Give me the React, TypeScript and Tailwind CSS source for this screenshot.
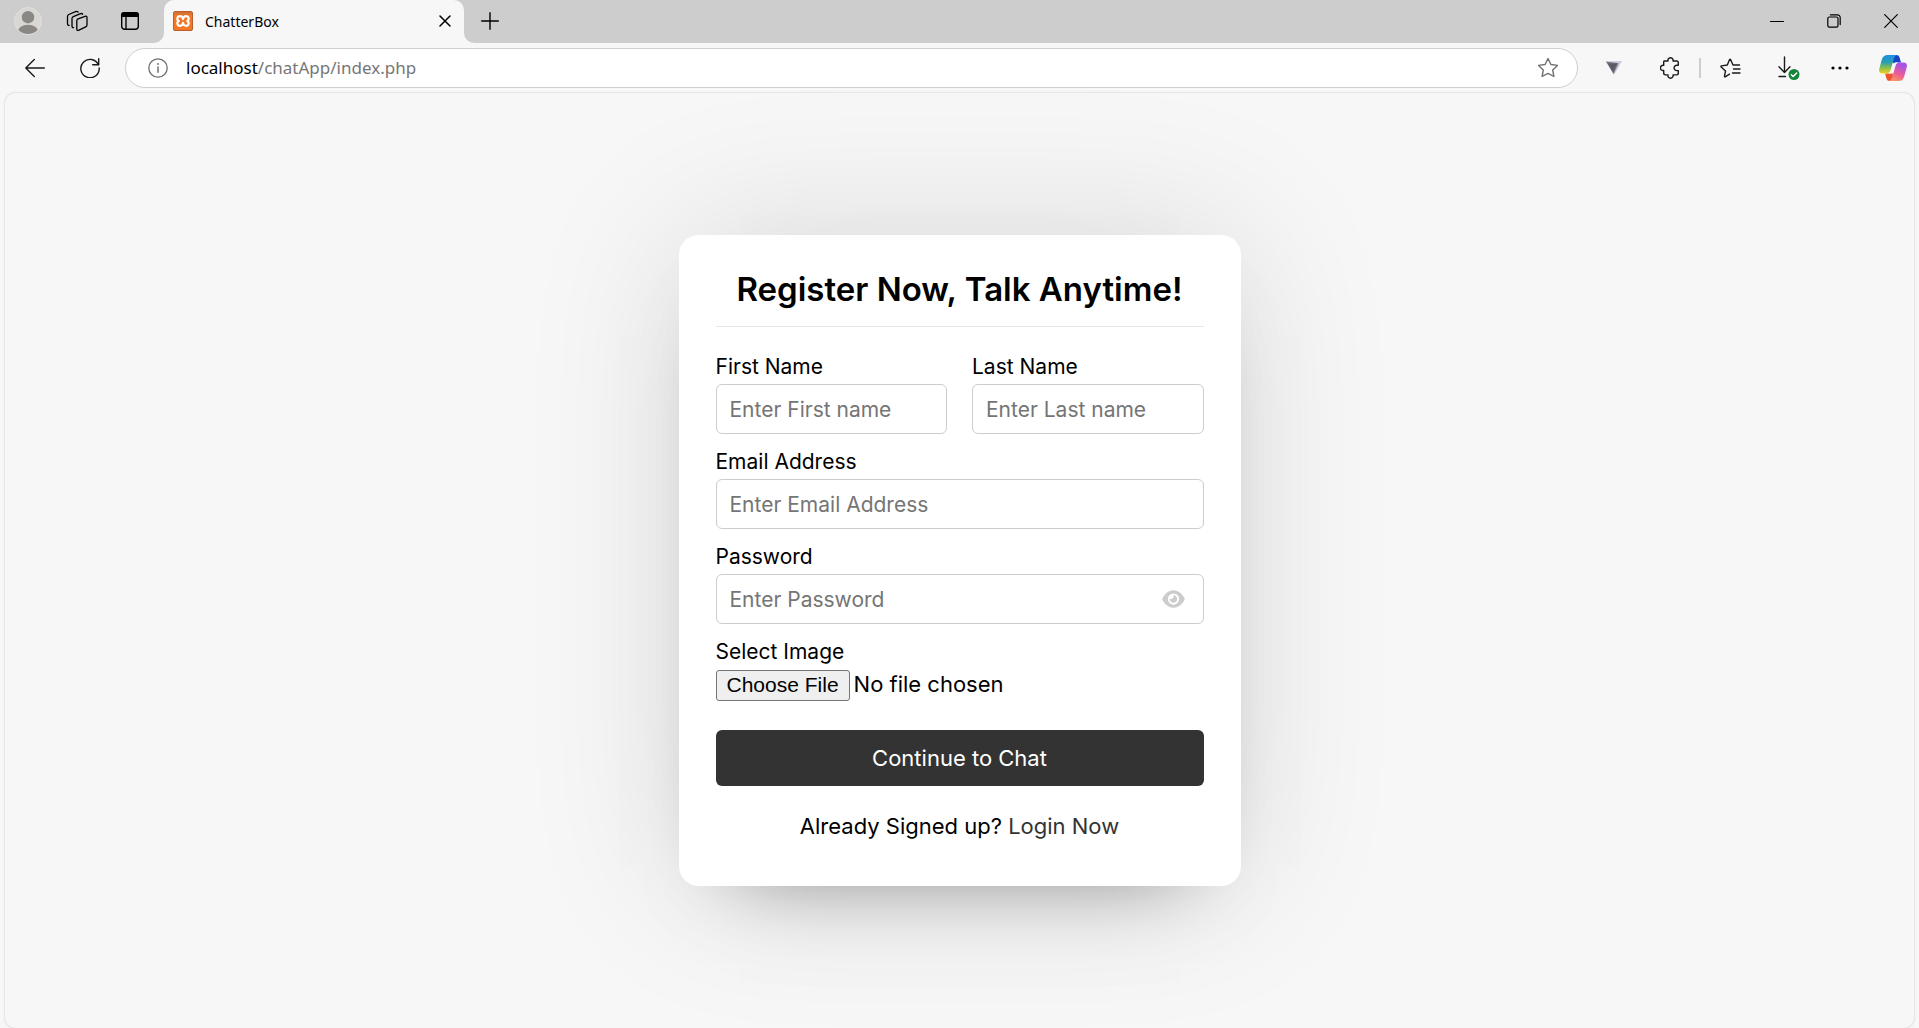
import type { ReactNode } from "react";
import { FaEye } from "react-icons/fa6";

type FieldProps = { id: string; label: string; type: string; placeholder: string };

function TextField({ id, label, type, placeholder }: FieldProps) {
  return (
    <div className="mb-[13px] flex min-w-0 flex-1 flex-col">
      <label htmlFor={id} className="mb-0.5 text-[21px] leading-[30px]">
        {label}
      </label>
      <div className="relative">
        <input
          id={id}
          type={type}
          placeholder={placeholder}
          className="h-[50px] w-full rounded-md border border-[#cccccc] bg-white px-[13px] text-[21px] outline-none placeholder:text-[#757575]"
        />
        {type === "password" && (
          <button type="button" aria-label="Show password" className="absolute inset-y-0 right-[19px] flex items-center text-[#cccccc]">
            <FaEye className="h-5 w-[23px]" />
          </button>
        )}
      </div>
    </div>
  );
}

function IconButton({ label, className, children }: { label: string; className: string; children: ReactNode }) {
  return (
    <button type="button" aria-label={label} className={`flex shrink-0 items-center justify-center ${className}`}>
      {children}
    </button>
  );
}

const line = { fill: "none", stroke: "currentColor", strokeLinecap: "round", strokeLinejoin: "round" } as const;

function TabStrip() {
  return (
    <header className="flex h-[43px] items-stretch bg-[#cdcdcd] text-black">
      <div className="flex w-[154px] items-center pb-px pl-[14px]">
        <IconButton label="Profile" className="w-7">
          <svg viewBox="0 0 28 28" className="size-7">
            <clipPath id="avatar"><circle cx="14" cy="14" r="13" /></clipPath>
            <circle cx="14" cy="14" r="13.5" fill="#d8d7d4" stroke="#e0dfdc" />
            <g fill="#8b8784" clipPath="url(#avatar)">
              <circle cx="14" cy="10.2" r="6.2" />
              <ellipse cx="14" cy="25" rx="10.5" ry="7.2" />
            </g>
          </svg>
        </IconButton>
        <IconButton label="Workspaces" className="ml-6 w-[22px]">
          <svg viewBox="0 0 22 22" className="size-[22px]" {...line} strokeWidth="1.3">
            <path d="M11.5 9.200 19 6.300Q21 5.700 21 7.600V14.800Q21 16.300 19.700 16.900L13 20.200Q10.800 21.100 10.800 19V10.600Q10.800 9.600 11.500 9.200Z" />
            <path d="M7.600 17.600Q6 17.700 6 15.900V8.600Q6 7.200 7.300 6.600L14 3.800Q15.900 3.100 16.600 4.200" />
            <path d="M3.200 15.300Q1.500 15.400 1.500 13.600V6.500Q1.500 5.100 2.800 4.500L9.500 1.700Q11.400 1 12.100 2.100" />
          </svg>
        </IconButton>
        <IconButton label="Tab actions" className="ml-[33px] w-[18px]">
          <svg viewBox="0 0 18 18" className="size-[18px]">
            <rect x=".7" y=".7" width="16.6" height="16.6" rx="3" {...line} strokeWidth="1.4" />
            <path d="M0 5V3a3 3 0 0 1 3-3h12a3 3 0 0 1 3 3v2Z" />
            <path d="M5 5v12.3" stroke="currentColor" strokeWidth="1.4" />
          </svg>
        </IconButton>
      </div>
      <div className="flex w-[10px] items-end bg-[#f7f7f7]">
        <div className="h-full w-full rounded-br-[10px] bg-[#cdcdcd]" />
      </div>
      <div className="flex w-[300px] bg-[#cdcdcd]">
        <div className="flex flex-1 items-center rounded-t-[10px] bg-[#f7f7f7] pr-[13px] pb-px pl-[9px]">
          <svg viewBox="0 0 20 20" className="size-5">
            <rect x=".5" y=".5" width="19" height="19" rx="1.5" fill="#f37726" stroke="#b95f2c" />
            <path d="M1 1h18v2.500H1Z" fill="#c8703a" opacity=".7" />
            <path
              d="M10 8.100C9.600 6 8.500 5.100 7 5.100 4.200 5.100 3.200 8.600 5.800 10 3.200 11.400 4.200 14.900 7 14.900 8.500 14.900 9.600 14 10 11.900 10.400 14 11.500 14.900 13 14.900 15.800 14.900 16.800 11.400 14.200 10 16.800 8.600 15.800 5.100 13 5.100 11.500 5.100 10.400 6 10 8.100Z"
              fill="none" stroke="#fff" strokeWidth="2.100" strokeLinejoin="round"
            />
          </svg>
          <span className="ml-3 flex-1 text-[14px]">ChatterBox</span>
          <IconButton label="Close tab" className="w-3">
            <svg viewBox="0 0 12 12" className="size-3" {...line} strokeWidth="1.5"><path d="m1 1 10 10M11 1 1 11" /></svg>
          </IconButton>
        </div>
      </div>
      <div className="flex w-[10px] bg-[#f7f7f7]">
        <div className="h-full w-full rounded-bl-[10px] bg-[#cdcdcd]" />
      </div>
      <IconButton label="New tab" className="ml-[7px] w-[18px] pb-0.5">
        <svg viewBox="0 0 18 18" className="size-[18px]" {...line} strokeWidth="1.4"><path d="M9 .7v16.6M.7 9h16.6" /></svg>
      </IconButton>
      <div className="ml-auto flex pb-px">
        <IconButton label="Minimize" className="w-[57px]">
          <svg viewBox="0 0 14 14" className="size-3.5" {...line}><path d="M.5 7.5h13" /></svg>
        </IconButton>
        <IconButton label="Restore" className="w-[57px]">
          <svg viewBox="0 0 14 14" className="size-3.5" {...line} strokeWidth="1.2">
            <rect x=".8" y="3" width="10.2" height="10.2" rx="1.6" />
            <path d="M3.4.8h7A2.8 2.8 0 0 1 13.2 3.6v7" />
          </svg>
        </IconButton>
        <IconButton label="Close window" className="w-[57px]">
          <svg viewBox="0 0 14 14" className="size-3.5" {...line} strokeWidth="1.2"><path d="m.7.7 12.6 12.6M13.3.7.7 13.3" /></svg>
        </IconButton>
      </div>
    </header>
  );
}

function Copilot() {
  return (
    <svg viewBox="0 0 28 26" className="h-[26px] w-7">
      <defs>
        <linearGradient id="cpLeft" x1="0" y1="0" x2="0" y2="1">
          <stop offset="0" stopColor="#1b8fe6" /><stop offset=".4" stopColor="#2a9fb0" /><stop offset=".7" stopColor="#8cc04a" /><stop offset="1" stopColor="#f7cf1d" />
        </linearGradient>
        <linearGradient id="cpRight" x1=".4" y1="0" x2="0" y2="1">
          <stop offset="0" stopColor="#a653e8" /><stop offset=".5" stopColor="#ee5c97" /><stop offset="1" stopColor="#fda257" />
        </linearGradient>
      </defs>
      <path d="M12 0H17.500Q19.800 0 20.500 2.300L22 7.500H17.500Q15.500 7.500 14.700 9.500Z" fill="#1745c8" />
      <path d="M16 26H10.500Q8.200 26 7.500 23.700L6 18.500H10Q12 18.500 12.800 16.500Z" fill="#ee5430" />
      <path d="M8.500 0H18Q15.800.5 15 3.200L11.500 15.500Q10.600 18.500 7.500 18.500H3.600Q-.8 18.500.3 13.800L2.800 4.600Q4.200 0 8.500 0Z" fill="url(#cpLeft)" />
      <path d="M19.500 26H10Q12.200 25.500 13 22.800L16.500 10.500Q17.400 7.500 20.500 7.500H24.400Q28.800 7.500 27.700 12.200L25.200 21.400Q23.800 26 19.500 26Z" fill="url(#cpRight)" />
      <path d="M13.600 9.500Q14.300 7.500 16.500 7.500H19Q17 8.300 16.300 10.800L14.500 17Q13.900 18.500 12 18.500H9Q11 17.700 11.700 15.500Z" fill="#f7f7f7" />
    </svg>
  );
}

function Toolbar() {
  return (
    <nav className="flex h-[50px] items-center pr-3 pl-[25px] text-[#1b1b1b]">
      <IconButton label="Back" className="w-5">
        <svg viewBox="0 0 20 20" className="size-5" {...line} strokeWidth="1.4"><path d="M19.300 10H.8M9.300 1.500.8 10l8.500 8.500" /></svg>
      </IconButton>
      <IconButton label="Refresh" className="ml-[35px] w-5">
        <svg viewBox="0 0 20 20" className="size-5" {...line} strokeWidth="1.4">
          <path d="M18.500 7A9.200 9.200 0 1 0 19.200 10M18.700.8v6h-6" />
        </svg>
      </IconButton>
      <div className="ml-[25px] flex h-10 flex-1 items-center rounded-full border border-[#cfcfcf] bg-white pr-[18px] pl-[22px]">
        <IconButton label="Site information" className="w-5 text-[#707070]">
          <svg viewBox="0 0 20 20" className="size-5" {...line} strokeWidth="1.3">
            <circle cx="10" cy="10" r="9.200" /><path d="M10 9v5.200" strokeWidth="1.500" /><circle cx="10" cy="6" r=".4" strokeWidth="1.200" />
          </svg>
        </IconButton>
        <a href="#" className="ml-[18px] flex-1 text-[17px] text-[#767676]">
          <span className="text-black">localhost</span>/chatApp/index.php
        </a>
        <IconButton label="Add to favorites" className="w-[22px] text-[#707070]">
          <svg viewBox="0 0 22 22" className="size-[22px]" {...line} strokeWidth="1.400">
            <path d="m11 1.500 2.900 6 6.600.9-4.800 4.600 1.200 6.500L11 16.400l-5.900 3.100L6.300 13 1.500 8.400l6.600-.9Z" />
          </svg>
        </IconButton>
      </div>
      <IconButton label="Extension" className="ml-7 w-4">
        <svg viewBox="0 0 16 14" className="h-3.5 w-4">
          <path d="M0 .5 16 0 8 14Z" fill="#cbc8d8" /><path d="M0 .5 12.500 2.200 7.500 13Z" fill="#77747f" /><path d="M2 2.500h9L7 11Z" fill="#5d5a65" />
        </svg>
      </IconButton>
      <IconButton label="Extensions" className="ml-[38px] w-5">
        <svg viewBox="0 0 20 22" className="h-[22px] w-5" {...line} strokeWidth="1.400">
          <path d="M4.200 4H8a2.600 2.600 0 1 1 5 0h3.500q1.800 0 1.800 1.800v2.400h-1.500a2.700 2.700 0 1 0 0 5.400h1.500v2.500q0 1.800-1.800 1.800H13a2.600 2.600 0 1 1-5 0H5.500q-1.800 0-1.800-1.800v-2.700a2.600 2.600 0 1 1 0-5V5q0-1 .5-1Z" />
        </svg>
      </IconButton>
      <div className="ml-[19px] h-5 w-0.5 bg-[#cdcdcd]" />
      <IconButton label="Favorites" className="ml-[19px] w-[21px]">
        <svg viewBox="0 0 21 20" className="h-5 w-[21px]" {...line} strokeWidth="1.400">
          <path d="M9.500 16.200 5.200 18.800q-.8.300-.7-.600L5.500 13 1.200 9q-.7-.8.300-1.100L7.300 7 9.600 1.500q.5-.8 1 0L13 7h6.500M13.500 11h6.500M12.500 15h7.500" />
        </svg>
      </IconButton>
      <IconButton label="Downloads" className="ml-[37px] w-[22px]">
        <svg viewBox="0 0 22 24" className="h-6 w-[22px]" {...line} strokeWidth="1.400">
          <path d="M6.500 1v15.500M1 10.800l5.500 5.700 5.500-5.700M1 20.500h6.500" />
          <circle cx="16" cy="18.500" r="5.500" fill="#12853b" stroke="none" />
          <path d="m13.300 18.700 1.900 1.900 3.500-3.700" stroke="#fff" />
        </svg>
      </IconButton>
      <IconButton label="Settings and more" className="ml-[31px] w-[18px]">
        <svg viewBox="0 0 18 4" className="h-1 w-[18px]"><circle cx="2" cy="2" r="1.600" /><circle cx="9" cy="2" r="1.600" /><circle cx="16" cy="2" r="1.600" /></svg>
      </IconButton>
      <IconButton label="Copilot" className="ml-[30px] w-7">
        <Copilot />
      </IconButton>
    </nav>
  );
}

function RegisterCard() {
  return (
    <section className="w-[562px] rounded-[20px] bg-white px-[37px] py-[31px] font-['Inter',sans-serif] text-black shadow-[0_0_160px_rgba(0,0,0,0.12),0_40px_80px_-60px_rgba(0,0,0,0.5)]">
      <h1 className="border-b border-[#e6e6e6] pb-3.5 text-center text-[33px] leading-[46px] font-semibold whitespace-nowrap">
        Register Now, Talk Anytime!
      </h1>
      <form className="mt-[25px]" onSubmit={(e) => e.preventDefault()}>
        <div className="flex gap-[25px]">
          <TextField id="first" label="First Name" type="text" placeholder="Enter First name" />
          <TextField id="last" label="Last Name" type="text" placeholder="Enter Last name" />
        </div>
        <TextField id="email" label="Email Address" type="email" placeholder="Enter Email Address" />
        <TextField id="password" label="Password" type="password" placeholder="Enter Password" />
        <div className="flex flex-col">
          <label htmlFor="image" className="mb-0.5 text-[21px] leading-[30px]">Select Image</label>
          <input
            id="image"
            type="file"
            className="h-[34px] text-[22px] leading-[31px] file:h-[31px] file:rounded-[3px] file:border file:border-[#767676] file:bg-[#efefef] file:px-[10px] file:font-['Liberation_Sans',sans-serif] file:text-[21px] file:leading-7 file:text-black"
          />
        </div>
        <button type="submit" className="mt-[27px] h-14 w-full rounded-md bg-[#333333] text-[22px] text-white">
          Continue to Chat
        </button>
      </form>
      <p className="mt-6 mb-3 pb-px text-center text-[22px] leading-8">
        Already Signed up? <a href="#" className="text-[#333333]">Login Now</a>
      </p>
    </section>
  );
}

export default function App() {
  return (
    <div className="flex min-h-screen flex-col bg-[#f7f7f7] font-['Noto_Sans',sans-serif]">
      <TabStrip />
      <Toolbar />
      <main className="mx-[5px] flex flex-1 items-center justify-center overflow-hidden rounded-[10px] bg-[#f7f7f7] shadow-[0_0_2px_rgba(0,0,0,0.25)]">
        <RegisterCard />
      </main>
    </div>
  );
}
